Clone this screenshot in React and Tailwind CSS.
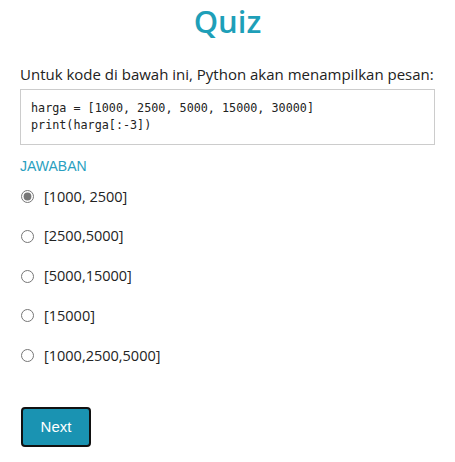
import React, { useState } from "react";

const options = ["[1000, 2500]", "[2500,5000]", "[5000,15000]", "[15000]", "[1000,2500,5000]"];

export default function App() {
  const [sel, setSel] = useState(0);
  return (
    <div className="bg-white px-5 text-[#222]" style={{ fontFamily: "'Open Sans', sans-serif" }}>
      <h1 className="text-center text-[31px] leading-[40px] pt-[1px] font-semibold text-[#1e9fb8]">Quiz</h1>
      <p className="mt-[22px] text-[15px] leading-[22px] text-[#222]">
        Untuk kode di bawah ini, Python akan menampilkan pesan:
      </p>
      <pre
        className="mt-[4px] border border-[#cccccc] px-[10px] py-[10px] text-[11.75px] leading-[17px] text-[#222]"
        style={{ fontFamily: "'DejaVu Sans Mono', monospace" }}
      >
        {"harga = [1000, 2500, 5000, 15000, 30000]\nprint(harga[:-3])"}
      </pre>
      <div
        className="mt-[13px] text-[14px] leading-[16px] text-[#2a9fc0]"
        style={{ fontFamily: "'Liberation Sans', Arial, sans-serif" }}
      >
        JAWABAN
      </div>
      <div className="mt-[11px] flex flex-col gap-[16.75px]">
        {options.map((o, i) => (
          <label key={i} className="flex items-center h-[23px] cursor-pointer">
            <input
              type="radio"
              name="q"
              checked={sel === i}
              onChange={() => setSel(i)}
              className="w-[13px] h-[13px] m-0 ml-[1px] accent-[#777]"
            />
            <span className="ml-[10px] text-[14.5px]">{o}</span>
          </label>
        ))}
      </div>
      <button
        className="mt-[40px] mb-[16px] ml-[1px] w-[70px] h-[40px] rounded-[4px] border-2 border-[#111] bg-[#1a93b2] text-white text-[15px]"
        style={{ fontFamily: "'Liberation Sans', Arial, sans-serif" }}
      >
        Next
      </button>
    </div>
  );
}
